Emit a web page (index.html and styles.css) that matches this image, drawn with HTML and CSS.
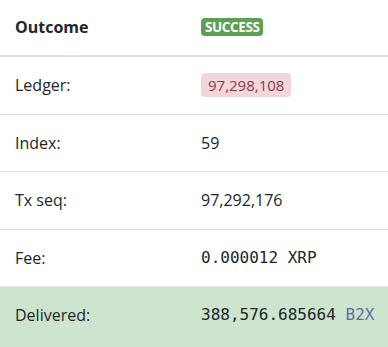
FILE: index.html
```html
<!DOCTYPE html>
<html>
<head>
<meta charset="utf-8">
<link rel="stylesheet" href="styles.css">
</head>
<body>
<table class="tx">
  <thead>
    <tr><th>Outcome</th><th><span class="badge ok">SUCCESS</span></th></tr>
  </thead>
  <tbody>
    <tr><td>Ledger:</td><td><span class="pill">97,298,108</span></td></tr>
    <tr><td>Index:</td><td>59</td></tr>
    <tr><td>Tx seq:</td><td>97,292,176</td></tr>
    <tr><td>Fee:</td><td class="mono">0.000012 XRP</td></tr>
    <tr class="delivered"><td>Delivered:</td><td class="mono">388,576.685664 <span class="cur">B2X</span></td></tr>
  </tbody>
</table>
</body>
</html>
```

FILE: styles.css
```css
html, body {
  margin: 0;
  padding: 0;
  background: #fff;
}
body {
  font-family: "Open Sans", "Noto Sans", sans-serif;
  font-size: 16px;
  color: #212529;
  overflow: hidden;
}
.tx {
  width: 100%;
  border-collapse: collapse;
  table-layout: fixed;
}
.tx th, .tx td {
  text-align: left;
  vertical-align: middle;
  padding: 16px 15px;
  line-height: 24.5px;
  white-space: nowrap;
}
.tx th:last-child, .tx td:last-child {
  padding-right: 0;
}
.tx th:first-child, .tx td:first-child {
  width: 156px;
}
.tx thead th {
  font-weight: 700;
  padding-top: 15px;
  padding-bottom: 15.5px;
  border-bottom: 2px solid #dee2e6;
}
.tx tbody td {
  border-top: 1px solid #dee2e6;
}
.tx tbody tr:first-child td {
  border-top: none;
}
.badge {
  display: inline-block;
  font-size: 13.5px;
  font-weight: 700;
  line-height: 18px;
  padding: 0 4px;
  border-radius: 4px;
  letter-spacing: -0.4px;
  vertical-align: 1px;
}
.ok {
  background: #5ca052;
  color: #fff;
}
.pill {
  display: inline-block;
  background: #f2d7da;
  color: #8b3a40;
  font-size: 15px;
  padding: 0 7px;
  border-radius: 4px;
  line-height: 24px;
}
.mono {
  font-family: "DejaVu Sans Mono", "Liberation Mono", monospace;
  font-size: 16px;
}
.delivered td {
  background: #cde5ce;
  border-top: 1px solid #a5d0a8;
  padding-bottom: 21px;
}
.cur {
  color: #5b6fa8;
}
```
